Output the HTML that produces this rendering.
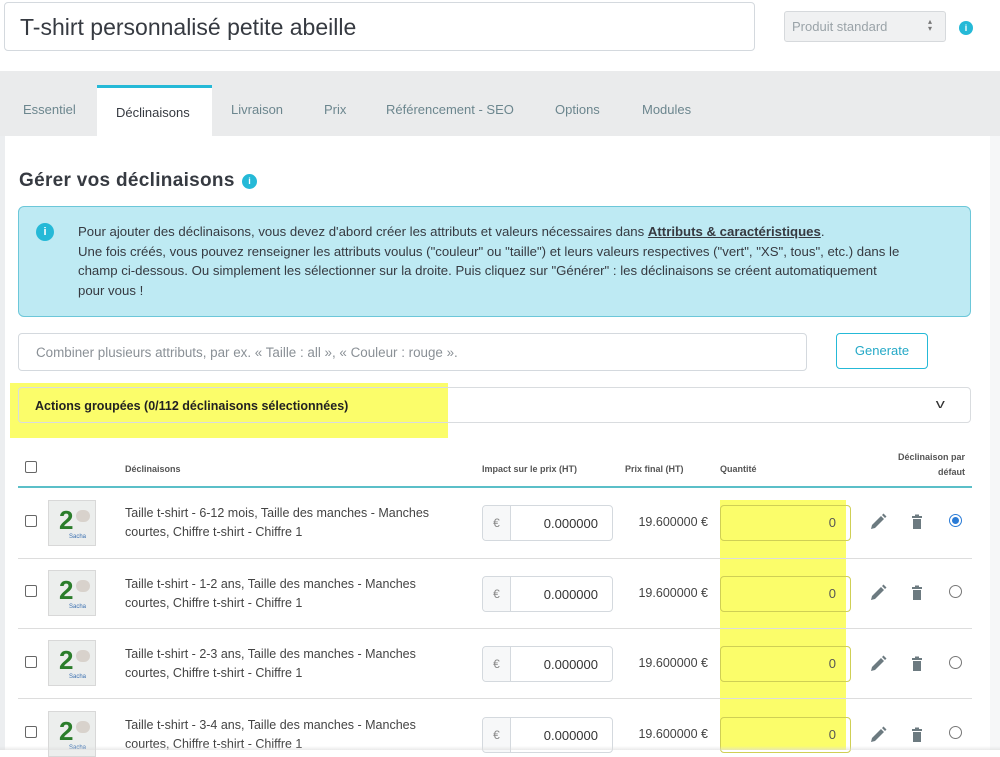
<!DOCTYPE html>
<html><head><meta charset="utf-8"><style>
*{box-sizing:border-box;margin:0;padding:0}
body{width:1000px;height:750px;overflow:hidden;background:#fff;font-family:"Liberation Sans",sans-serif;color:#363a41;position:relative}
.a{position:absolute}
.inp{border:1px solid #d4d9de;border-radius:4px;background:#fff}
.tab{position:absolute;top:102px;font-size:13px;color:#6c868e}
.th{position:absolute;top:464px;font-size:9px;font-weight:bold;color:#555}
.cb{position:absolute;width:12px;height:12px;border:1px solid #666;border-radius:2px;background:#fff}
.txt{position:absolute;left:125px;font-size:12.5px;color:#444;line-height:19px}
.img{position:absolute;left:48px;width:48px;height:46px;background:#eceeed;border:1px solid #d8d8d8}
.img b{position:absolute;left:10px;top:4px;font-size:26px;color:#2b7d2b;font-weight:bold}
.img i{position:absolute;left:27px;top:9px;width:14px;height:12px;border-radius:6px;background:#d8d2cc}
.img s{position:absolute;left:20px;top:33px;font-size:6px;color:#3a6fb0;text-decoration:none}
.euro{position:absolute;left:482px;width:131px;height:36px}
.euro span{position:absolute;left:0;top:0;width:28px;height:34px;border-right:1px solid #d4d9de;background:#f7f8f9;font-size:12px;color:#888;text-align:center;line-height:34px;border-radius:4px 0 0 4px}
.euro em{position:absolute;right:14px;top:10px;font-size:13px;font-style:normal;color:#333}
.fp{position:absolute;left:600px;width:108px;text-align:right;font-size:12.5px;color:#444}
.q{position:absolute;left:720px;width:131px;height:36px;border:1px solid #cfcf55;border-radius:4px;text-align:right;padding-right:14px;line-height:34px;font-size:13px;color:#555}
.sep{position:absolute;left:18px;width:954px;height:1px;background:#ddd}
.rad{position:absolute;left:949px;width:13px;height:13px;border:1px solid #777;border-radius:50%;background:#fff}
</style></head><body>
<div class="a" style="left:0;top:136px;width:5px;height:614px;background:#eceef0"></div>
<div class="a" style="left:990px;top:136px;width:10px;height:614px;background:#f6f7f8"></div>
<div class="a inp" style="left:4px;top:2px;width:751px;height:49px"></div>
<div class="a" style="left:20px;top:14px;font-size:23px;color:#363a41">T-shirt personnalisé petite abeille</div>
<div class="a" style="left:784px;top:11px;width:162px;height:31px;background:#f0f1f2;border:1px solid #d6d9dc;border-radius:3px"></div>
<div class="a" style="left:792px;top:19px;font-size:13px;color:#9aa3a8">Produit standard</div>
<div class="a" style="left:928px;top:18px;font-size:8px;color:#777;line-height:7px">▴<br>▾</div>
<div class="a" style="left:959px;top:21px;width:14px;height:14px;border-radius:50%;background:#25b9d7;color:#fff;font-size:9px;text-align:center;line-height:14px;font-weight:bold">i</div>
<div class="a" style="left:0;top:71px;width:1000px;height:65px;background:#eaebec"></div>
<div class="a" style="left:97px;top:85px;width:115px;height:51px;background:#fff;border-top:3px solid #25b9d7"></div>
<div class="tab" style="left:23px">Essentiel</div>
<div class="tab" style="left:116px;top:105px;color:#363a41">Déclinaisons</div>
<div class="tab" style="left:231px">Livraison</div>
<div class="tab" style="left:324px">Prix</div>
<div class="tab" style="left:386px">Référencement - SEO</div>
<div class="tab" style="left:555px">Options</div>
<div class="tab" style="left:642px">Modules</div>
<div class="a" style="left:19px;top:170px;font-size:19px;font-weight:bold;color:#363a41;letter-spacing:0.3px">Gérer vos déclinaisons</div>
<div class="a" style="left:242px;top:174px;width:15px;height:15px;border-radius:50%;background:#25b9d7;color:#fff;font-size:9px;text-align:center;line-height:15px;font-weight:bold">i</div>
<div class="a" style="left:18px;top:206px;width:953px;height:111px;background:#beeaf3;border:1px solid #6cc7d9;border-radius:6px"></div>
<div class="a" style="left:36px;top:223px;width:18px;height:18px;border-radius:50%;background:#25b9d7;color:#fff;font-size:11px;text-align:center;line-height:18px;font-weight:bold">i</div>
<div class="a" style="left:78px;top:222px;font-size:13.2px;line-height:19.5px;color:#363a41;white-space:nowrap">Pour ajouter des déclinaisons, vous devez d'abord créer les attributs et valeurs nécessaires dans <b style="text-decoration:underline">Attributs &amp; caractéristiques</b>.<br>Une fois créés, vous pouvez renseigner les attributs voulus ("couleur" ou "taille") et leurs valeurs respectives ("vert", "XS", tous", etc.) dans le<br>champ ci-dessous. Ou simplement les sélectionner sur la droite. Puis cliquez sur "Générer" : les déclinaisons se créent automatiquement<br>pour vous !</div>
<div class="a inp" style="left:18px;top:333px;width:789px;height:38px"></div>
<div class="a" style="left:36px;top:345px;font-size:13.4px;color:#8a9096">Combiner plusieurs attributs, par ex. « Taille : all », « Couleur : rouge ».</div>
<div class="a" style="left:836px;top:333px;width:92px;height:36px;border:1px solid #25b9d7;border-radius:4px;color:#25a9c7;font-size:13px;text-align:center;line-height:34px">Generate</div>
<div class="a" style="left:10px;top:383px;width:438px;height:55px;background:#fbfd6a"></div>
<div class="a" style="left:18px;top:387px;width:953px;height:36px;border:1px solid #d9dcdf;border-radius:4px"></div>
<div class="a" style="left:35px;top:399px;font-size:12.5px;font-weight:bold;color:#222">Actions groupées (0/112 déclinaisons sélectionnées)</div>
<div class="a" style="left:937px;top:396px;font-size:13px;color:#333;transform:scaleX(1.4)">v</div>
<div class="cb" style="left:25px;top:461px"></div>
<div class="th" style="left:125px">Déclinaisons</div>
<div class="th" style="left:482px">Impact sur le prix (HT)</div>
<div class="th" style="left:625px">Prix final (HT)</div>
<div class="th" style="left:720px">Quantité</div>
<div class="th" style="left:860px;top:450px;width:105px;text-align:right;line-height:15px">Déclinaison par<br>défaut</div>
<div class="a" style="left:18px;top:486px;width:954px;height:2px;background:#5bbfc8"></div>
<div class="a" style="left:720px;top:500px;width:126px;height:250px;background:#fbfd6a"></div>

<div class="sep" style="top:558px"></div><div class="sep" style="top:628px"></div><div class="sep" style="top:698px"></div>

<div class="cb" style="left:25px;top:515px"></div><div class="img" style="top:500px"><b>2</b><i></i><s>Sacha</s></div>
<div class="txt" style="top:504px">Taille t-shirt - 6-12 mois, Taille des manches - Manches<br>courtes, Chiffre t-shirt - Chiffre 1</div>
<div class="euro inp" style="top:505px"><span>€</span><em>0.000000</em></div><div class="fp" style="top:515px">19.600000 €</div>
<div class="q" style="top:505px">0</div>
<div class="rad" style="top:514px;border-color:#2a7bd6"><div style="margin:2px;width:7px;height:7px;border-radius:50%;background:#2a7bd6"></div></div>

<div class="cb" style="left:25px;top:585px"></div><div class="img" style="top:570px"><b>2</b><i></i><s>Sacha</s></div>
<div class="txt" style="top:575px">Taille t-shirt - 1-2 ans, Taille des manches - Manches<br>courtes, Chiffre t-shirt - Chiffre 1</div>
<div class="euro inp" style="top:576px"><span>€</span><em>0.000000</em></div><div class="fp" style="top:586px">19.600000 €</div>
<div class="q" style="top:576px">0</div><div class="rad" style="top:585px"></div>

<div class="cb" style="left:25px;top:656px"></div><div class="img" style="top:640px"><b>2</b><i></i><s>Sacha</s></div>
<div class="txt" style="top:645px">Taille t-shirt - 2-3 ans, Taille des manches - Manches<br>courtes, Chiffre t-shirt - Chiffre 1</div>
<div class="euro inp" style="top:646px"><span>€</span><em>0.000000</em></div><div class="fp" style="top:656px">19.600000 €</div>
<div class="q" style="top:646px">0</div><div class="rad" style="top:656px"></div>

<div class="cb" style="left:25px;top:726px"></div><div class="img" style="top:711px"><b>2</b><i></i><s>Sacha</s></div>
<div class="txt" style="top:716px">Taille t-shirt - 3-4 ans, Taille des manches - Manches<br>courtes, Chiffre t-shirt - Chiffre 1</div>
<div class="euro inp" style="top:717px"><span>€</span><em>0.000000</em></div><div class="fp" style="top:727px">19.600000 €</div>
<div class="q" style="top:717px">0</div><div class="rad" style="top:726px"></div>

<svg class="a" style="left:868px;top:510px" width="60" height="240" viewBox="0 0 60 240">
<g fill="#6c7a80">
<g id="r"><path d="M3 19 L4 15 L13 6 L16 9 L7 18 Z M14 5 L15.5 3.5 L18.5 6.5 L17 8 Z"/><path d="M45 9h8v10h-8z M44 6h10v2h-10z M47 4.5h4v2h-4z"/></g>
<use href="#r" y="71"/><use href="#r" y="142"/><use href="#r" y="213"/>
</g></svg>
<div class="a" style="left:0;top:746px;width:1000px;height:4px;background:linear-gradient(rgba(255,255,255,0),rgba(220,220,220,0.6))"></div>
</body></html>
